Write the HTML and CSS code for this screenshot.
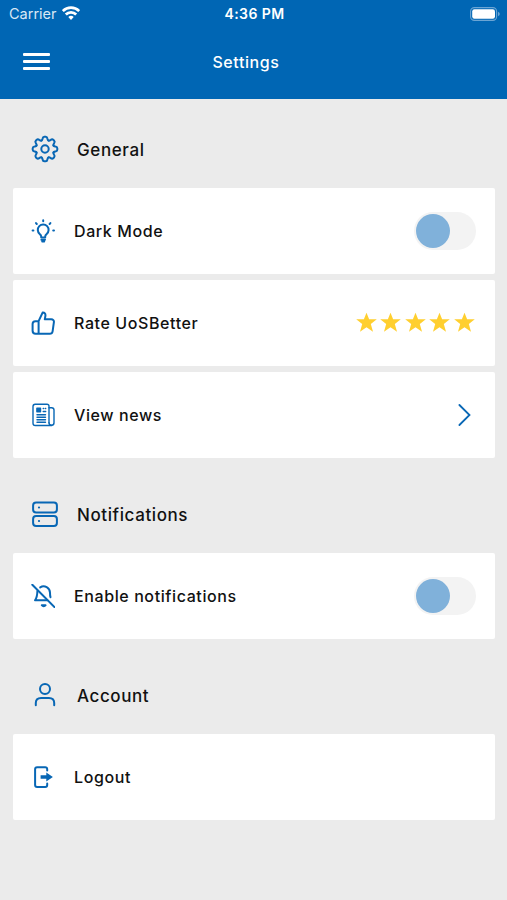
FILE: index.html
```
<!DOCTYPE html>
<html lang="en">
<head>
    <meta charset="UTF-8">
    <title>Settings</title>
    <link rel="stylesheet" href="styles.css">
</head>
<body>
    <header>
        <div class="status-bar">
            <div class="carrier">
                <span>Carrier</span>
                <svg width="18" height="14" viewBox="0 0 18 14" fill="none" stroke="#fff" stroke-width="2.7">
                    <path d="M.8 5.1a11.6 11.6 0 0 1 16.4 0"/>
                    <path d="M3.8 8.5a7.2 7.2 0 0 1 10.4 0"/>
                    <path d="M9 14l-2.7-3a4 4 0 0 1 5.4 0z" fill="#fff" stroke="none"/>
                </svg>
            </div>
            <span class="time">4:36 PM</span>
            <svg class="battery" width="30" height="14" viewBox="0 0 30 14">
                <rect x=".6" y=".6" width="26" height="12.8" rx="3.8" fill="none" stroke="#6ba5d4" stroke-width="1.1"/>
                <rect x="2.2" y="2.3" width="22.8" height="9.4" rx="2.2" fill="#fff"/>
                <path d="M28 4.7q1.8 .8 1.8 2.3t-1.8 2.3z" fill="#6ba5d4"/>
            </svg>
        </div>
        <div class="nav-bar">
            <button class="menu-button" aria-label="Menu">
                <span></span>
                <span></span>
                <span></span>
            </button>
            <h1>Settings</h1>
        </div>
    </header>

    <main>
        <section>
            <h2>
                <svg class="icon" width="28" height="28" viewBox="-14 -14 28 28">
                    <defs>
                        <path id="tooth" d="M-3.5-8.45C-2.6-8.85-2.6-9.5-2.4-10.5Q-2.1-12.3-.7-12.3H.7Q2.1-12.3 2.4-10.5C2.6-9.5 2.6-8.85 3.5-8.45"/>
                    </defs>
                    <use href="#tooth"/>
                    <use href="#tooth" transform="rotate(45)"/>
                    <use href="#tooth" transform="rotate(90)"/>
                    <use href="#tooth" transform="rotate(135)"/>
                    <use href="#tooth" transform="rotate(180)"/>
                    <use href="#tooth" transform="rotate(225)"/>
                    <use href="#tooth" transform="rotate(270)"/>
                    <use href="#tooth" transform="rotate(315)"/>
                    <circle r="3.7"/>
                </svg>
                <span>General</span>
            </h2>
            <div class="card">
                <svg class="icon" width="24" height="24" viewBox="0 0 24 24">
                    <path d="M10.2 18.6v-1.2c0-1-.6-1.6-1.5-2.4a5.4 5.4 0 1 1 7 0c-.9.8-1.5 1.4-1.5 2.4v1.2z"/>
                    <path d="M10.4 20.8h3.6M11.2 22.6h2"/>
                    <path d="M12.2 1.2v1M5 4.1l.8.9M19.4 4.1l-.8.9M1.6 11.6h.8M22.2 11.6h.8"/>
                </svg>
                <span class="label">Dark Mode</span>
                <div class="toggle"></div>
            </div>
            <div class="card">
                <svg class="icon" width="24" height="24" viewBox="0 0 24 24">
                    <path d="M7.6 10.2L11.6 1.6C13.6 1.4 14.7 2.9 14.4 4.8L13.8 8.3H20.2C22 8.3 23.2 9.6 22.9 11.2L21.6 20.3C21.3 22 20.4 22.7 18.8 22.7H4.6C2.6 22.7 1.6 21.7 1.6 19.8V13C1.6 11.2 2.6 10.2 4.4 10.2H7.6V22.5"/>
                </svg>
                <span class="label">Rate UoSBetter</span>
                <div class="stars">
                    <svg viewBox="0 0 20 20"><path d="M10 .6l2.5 6.4h7.3l-5.7 4.4 2.1 7.4-6.2-4.3-6.2 4.3 2.1-7.4L.2 7h7.3z"/></svg>
                    <svg viewBox="0 0 20 20"><path d="M10 .6l2.5 6.4h7.3l-5.7 4.4 2.1 7.4-6.2-4.3-6.2 4.3 2.1-7.4L.2 7h7.3z"/></svg>
                    <svg viewBox="0 0 20 20"><path d="M10 .6l2.5 6.4h7.3l-5.7 4.4 2.1 7.4-6.2-4.3-6.2 4.3 2.1-7.4L.2 7h7.3z"/></svg>
                    <svg viewBox="0 0 20 20"><path d="M10 .6l2.5 6.4h7.3l-5.7 4.4 2.1 7.4-6.2-4.3-6.2 4.3 2.1-7.4L.2 7h7.3z"/></svg>
                    <svg viewBox="0 0 20 20"><path d="M10 .6l2.5 6.4h7.3l-5.7 4.4 2.1 7.4-6.2-4.3-6.2 4.3 2.1-7.4L.2 7h7.3z"/></svg>
                </div>
            </div>
            <div class="card">
                <svg class="icon thin" width="24" height="24" viewBox="0 0 24 24">
                    <path d="M18 19.8V3.2c0-1.2-.8-2-2-2H4.2c-1.3 0-2.2.9-2.2 2.2v16.8c0 1.4.9 2.3 2.3 2.3h16.5"/>
                    <path d="M18 4.8h2.6c1.5 0 2.4.8 2.4 2.3v12.7a2.5 2.5 0 0 1-5 0"/>
                    <path d="M6 11.7h8.5M6 14.3h8.5M6 16.8h8.5M6 19.3h8.5M12.2 5.5h.4M14.3 5.5h.4M12.2 8.5h2.5"/>
                    <rect x="5.9" y="5.2" width="3.6" height="3.5" fill="#0867b5"/>
                </svg>
                <span class="label">View news</span>
                <svg class="chevron" width="14" height="24" viewBox="0 0 14 24">
                    <path d="M2.4 2L12.5 12 2.4 22"/>
                </svg>
            </div>
        </section>

        <section>
            <h2>
                <svg class="icon" width="28" height="28" viewBox="0 0 28 28">
                    <rect x="2.1" y="2.6" width="23.8" height="9.8" rx="3"/>
                    <rect x="2.1" y="16.1" width="23.8" height="9.8" rx="3"/>
                    <path d="M7.9 7.5h.2M7.9 21h.2"/>
                </svg>
                <span>Notifications</span>
            </h2>
            <div class="card">
                <svg class="icon" width="24" height="24" viewBox="0 0 24 24">
                    <path d="M1.3.7l22.4 22.6"/>
                    <path d="M9.2 3.4A6.4 6.4 0 0 1 19 8.800c0 1.800 0 3 .5 4.400"/>
                    <path d="M6.400 7c-.1 4.600-.7 7-2.400 9.300h12.300"/>
                    <path d="M10.800 21.200c1 1.300 2.800 1.300 3.800 0z"/>
                </svg>
                <span class="label">Enable notifications</span>
                <div class="toggle"></div>
            </div>
        </section>

        <section>
            <h2>
                <svg class="icon" width="28" height="28" viewBox="0 0 28 28">
                    <circle cx="14" cy="8" r="5"/>
                    <path d="M4.8 24.3v-2.3c0-3.3 2-5 5.3-5h7.8c3.3 0 5.3 1.7 5.3 5v2.3"/>
                </svg>
                <span>Account</span>
            </h2>
            <div class="card">
                <svg class="icon" width="24" height="24" viewBox="0 0 24 24">
                    <path d="M16.2 5.4V4.2c0-1.3-.7-2-2-2H6.1c-1.3 0-2 .7-2 2v15.8c0 1.3.7 2 2 2h8.1c1.3 0 2-.7 2-2V18.6"/>
                    <path d="M9.6 10.2h5.7V7.6L21.9 12l-6.6 4.4v-2.6H9.6z" fill="#0867b5" stroke="none"/>
                </svg>
                <span class="label">Logout</span>
            </div>
        </section>
    </main>
</body>
</html>
```
FILE: styles.css
```
* {
    box-sizing: border-box;
}
body {
    margin: 0;
    min-height: 900px;
    background: #ebebeb;
    color: #111;
    font-family: Inter, "Open Sans", sans-serif;
}
header {
    height: 98.5px;
    background: #0066b4;
    color: #fff;
}
.status-bar {
    display: grid;
    grid-template-columns: 1fr auto 1fr;
    align-items: center;
    height: 27px;
    padding: 0 7px 0 9px;
    font-size: 14.5px;
}
.carrier {
    display: flex;
    align-items: center;
    gap: 5px;
    color: #d9e8f4;
}
.carrier svg {
    margin-top: -2px;
}
.time {
    font-weight: 600;
    font-size: 14px;
    letter-spacing: 0.4px;
}
.battery {
    justify-self: end;
}
.nav-bar {
    display: grid;
    grid-template-columns: 1fr auto 1fr;
    align-items: center;
    height: 69px;
    padding: 0 38px 0 23px;
}
.menu-button {
    display: flex;
    flex-direction: column;
    gap: 4px;
    width: 27px;
    padding: 0;
    border: none;
    background: none;
}
.menu-button span {
    height: 3px;
    border-radius: 1px;
    background: #fff;
}
h1 {
    margin: 0;
    font-size: 16px;
    font-weight: 500;
    letter-spacing: 0.6px;
}
main {
    padding: 12px 12px 0 13px;
}
section {
    margin-bottom: 18px;
}
h2 {
    display: flex;
    align-items: center;
    gap: 18px;
    height: 77px;
    margin: 0;
    padding-left: 18px;
    font-size: 17px;
    font-weight: 500;
    letter-spacing: 0.6px;
}
h2 span {
    padding-top: 2px;
}
.card {
    display: flex;
    align-items: center;
    height: 86px;
    margin-bottom: 6px;
    padding: 0 18px;
    border-radius: 2px;
    background: #fff;
}
.card:last-child {
    margin-bottom: 0;
}
.label {
    flex: 1;
    margin-left: 19px;
    font-size: 16px;
    font-weight: 500;
    letter-spacing: 0.6px;
}
.icon {
    flex: none;
    fill: none;
    stroke: #0867b5;
    stroke-width: 2;
    stroke-linecap: round;
    stroke-linejoin: round;
}
.icon.thin {
    stroke-width: 1.4;
}
.toggle {
    width: 62px;
    height: 38px;
    margin-right: 1px;
    padding: 2px;
    border-radius: 19px;
    background: #f3f3f3;
}
.toggle::before {
    content: "";
    display: block;
    width: 34px;
    height: 34px;
    border-radius: 50%;
    background: #80b1da;
}
.stars {
    display: flex;
    gap: 3.4px;
    margin-right: 2.5px;
}
.stars svg {
    width: 21px;
    height: 21px;
    fill: #ffcf2f;
}
.chevron {
    margin-right: 6px;
    fill: none;
    stroke: #0867b5;
    stroke-width: 1.8;
    stroke-linecap: round;
}
```
